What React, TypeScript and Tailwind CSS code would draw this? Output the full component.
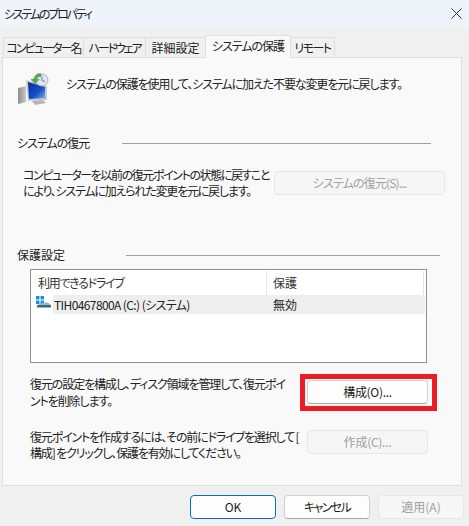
const font = { fontFamily: '"Noto Sans CJK JP", sans-serif' };

function RestoreIcon() {
  return (
    <svg width="32" height="32" viewBox="0 0 32 32" className="shrink-0">
      <defs>
        <linearGradient id="scr" x1="0" y1="0" x2="1" y2="1">
          <stop offset="0" stopColor="#0a2aa0" />
          <stop offset="0.6" stopColor="#1450c8" />
          <stop offset="1" stopColor="#7fb0ea" />
        </linearGradient>
        <linearGradient id="case" x1="0" y1="0" x2="1" y2="0">
          <stop offset="0" stopColor="#8d8d8d" />
          <stop offset="1" stopColor="#c8c8c8" />
        </linearGradient>
      </defs>
      <path d="M1 15 L9 13 L9 29 L1 31 Z" fill="url(#case)" />
      <path d="M9 7 L30 13 L30 27 L11 28 Z" fill="#c4c8cc" />
      <path d="M11 9 L28 14 L28 25 L12 26 Z" fill="url(#scr)" />
      <path d="M15 28 L26 27 L29 30 L18 32 Z" fill="#b4b6b8" />
      <circle cx="25" cy="7" r="6" fill="#dfe6f2" stroke="#a9b4c6" strokeWidth="1" />
      <path d="M25 3.5 V7.5 L28 8.5" fill="none" stroke="#6f7c90" strokeWidth="1" />
      <path d="M17 6 C18 1.5 21 0 24 1 L24 3.5 C21.5 3 20 4 19.5 6.5 L22 6.5 L18 10.5 L14 6.5 Z" fill="#55b13f" stroke="#2f8a2a" strokeWidth="0.5" />
    </svg>
  );
}

function DriveIcon() {
  return (
    <svg width="16" height="16" viewBox="0 0 16 16" className="shrink-0">
      <rect x="0" y="0" width="3.5" height="3.5" fill="#1f8ee0" />
      <rect x="4.5" y="0" width="3.5" height="3.5" fill="#1f8ee0" />
      <rect x="0" y="4.5" width="3.5" height="3.5" fill="#1f8ee0" />
      <rect x="4.5" y="4.5" width="3.5" height="3.5" fill="#1f8ee0" />
      <path d="M1 9 L8.5 6.5 H12 L15 9 Z" fill="#a9b6bf" />
      <rect x="1" y="9" width="14" height="2.5" rx="0.5" fill="#2f6f80" />
    </svg>
  );
}

function Btn({ label, w, disabled, primary, track = "" }: { label: string; w: string; disabled?: boolean; primary?: boolean; track?: string }) {
  let tone = "bg-[#fdfdfd] border-[#d0d0d0] border-b-[#a8a8a8] text-[#1a1a1a]";
  if (disabled) tone = "bg-[#f6f6f6] border-[#e6e6e6] text-[#a0a0a0]";
  if (primary) tone = "bg-[#fdfdfd] border-[#0a6cc4] text-[#1a1a1a]";
  return (
    <div className={`${w} h-[24px] rounded-[4px] border flex items-center justify-center text-[12px] ${track} ${tone}`}>
      {label}
    </div>
  );
}

function Heading({ label, labelWidth, lineWidth, track = "" }: { label: string; labelWidth: string; lineWidth: string; track?: string }) {
  return (
    <div className="flex items-center h-[18px] ml-[14px]">
      <span className={`${labelWidth} text-[12px] ${track} text-[#222] whitespace-nowrap`}>{label}</span>
      <div className={`${lineWidth} h-px bg-[#a0a0a0]`} />
    </div>
  );
}

function Tab({ label, w, active, track = "" }: { label: string; w: string; active?: boolean; track?: string }) {
  if (active) {
    return (
      <div className={`${w} h-[23px] -mb-px pb-[2px] relative z-10 bg-[#f9f9f9] border border-[#dfdfdf] border-b-0 flex items-center justify-center text-[12px] ${track} text-[#222] whitespace-nowrap`}>
        {label}
      </div>
    );
  }
  return (
    <div className={`${w} h-[20px] bg-[#f0f0f0] border border-[#dfdfdf] border-b-0 -ml-px flex items-center justify-center text-[12px] ${track} text-[#222] whitespace-nowrap`}>
      {label}
    </div>
  );
}

export default function App() {
  return (
    <div className={`w-[469px] h-[526px] bg-[#f0f0f0] overflow-hidden flex flex-col [font-feature-settings:"palt"]`} style={font}>
      <div className="h-[27px] bg-[#eff4fb] flex items-center justify-between pl-[4px] pr-[7px] shrink-0">
        <span className="text-[12px] tracking-[-2.2px] text-[#222]">システムのプロパティ</span>
        <svg width="11" height="11" viewBox="0 0 11 11">
          <path d="M0.5 0.5 L10.5 10.5 M10.5 0.5 L0.5 10.5" stroke="#333" strokeWidth="1" />
        </svg>
      </div>

      <div className="flex items-end h-[30px] pl-[4px] shrink-0">
        <Tab label="コンピューター名" w="w-[81px]" track="tracking-[-1.9px]" />
        <Tab label="ハードウェア" w="w-[63px]" track="tracking-[-2.1px]" />
        <Tab label="詳細設定" w="w-[61px]" />
        <Tab label="システムの保護" w="w-[86px] -ml-px" track="tracking-[-1px]" active />
        <Tab label="リモート" w="w-[45px]" track="tracking-[-1.5px]" />
      </div>

      <div className="ml-[2px] w-[460px] h-[429px] bg-[#f9f9f9] border border-[#dfdfdf] shrink-0 flex flex-col">
        <div className="flex items-start pl-[14px] pt-[15px] h-[76px]">
          <RestoreIcon />
          <span className="ml-[17px] mt-[2px] text-[12px] leading-[18px] tracking-[-1.1px] text-[#222] whitespace-nowrap">
            システムの保護を使用して、システムに加えた不要な変更を元に戻します。
          </span>
        </div>

        <Heading label="システムの復元" labelWidth="w-[105px]" lineWidth="w-[309px]" track="tracking-[-1px]" />

        <div className="flex items-center h-[34px] mt-[14px] ml-[20px]">
          <div className="w-[251px] text-[12px] leading-[16px] text-[#222] whitespace-nowrap">
            <div className="tracking-[-1.4px]">コンピューターを以前の復元ポイントの状態に戻すこと</div>
            <div className="tracking-[-1.2px]">により、システムに加えられた変更を元に戻します。</div>
          </div>
          <Btn label="システムの復元(S)..." w="w-[171px]" track="tracking-[-0.85px]" disabled />
        </div>

        <div className="mt-[46px]">
          <Heading label="保護設定" labelWidth="w-[109px]" lineWidth="w-[314px]" />
        </div>

        <div className="ml-[27px] mt-[5px] w-[397px] h-[94px] bg-white border border-[#8b9099] p-px">
          <div className="flex h-[24px] text-[12px] text-[#333] items-center">
            <div className="w-[235px] h-full border-r border-[#e4e4e4] pl-[6px] flex items-center tracking-[-1.3px]">利用できるドライブ</div>
            <div className="pl-[6px] w-[157px] h-full border-r border-[#e4e4e4] flex items-center">保護</div>
          </div>
          <div className="flex h-[19px] items-center text-[12px] text-[#222]">
            <div className="w-[21px] flex justify-start pl-[4px] -mt-[2px]">
              <DriveIcon />
            </div>
            <div className="flex flex-1 h-full bg-[#eeeeee] items-center">
              <div className="w-[214px] pl-[1px] tracking-[-0.6px] whitespace-nowrap">TIH0467800A (C:) (システム)</div>
              <div className="pl-[6px]">無効</div>
            </div>
          </div>
        </div>

        <div className="flex items-start ml-[27px] mt-[11px]">
          <div className="w-[270px] pt-[1px] text-[12px] leading-[17px] tracking-[-1.1px] text-[#222] whitespace-nowrap">
            <div>復元の設定を構成し、ディスク領域を管理して、復元ポイ</div>
            <div>ントを削除します。</div>
          </div>
          <div className="border-[5px] border-[#ed1c24] pl-[2px] pr-[4px] pt-[1px] pb-[2px]">
            <Btn label="構成(O)..." w="w-[121px]" track="tracking-[-0.3px]" />
          </div>
        </div>

        <div className="flex items-start ml-[27px] mt-[19px]">
          <div className="w-[277px] h-[33px] -mt-[1px] text-[12px] leading-[16px] tracking-[-1.15px] text-[#222] whitespace-nowrap">
            <div>復元ポイントを作成するには、その前にドライブを選択して [</div>
            <div>構成] をクリックし、保護を有効にしてください。</div>
          </div>
          <Btn label="作成(C)..." w="w-[121px]" track="tracking-[-0.3px]" disabled />
        </div>
      </div>

      <div className="flex justify-end gap-[8px] pr-[5px] mt-[9px]">
        <Btn label="OK" w="w-[86px]" primary />
        <Btn label="キャンセル" w="w-[86px]" track="tracking-[-1.6px]" />
        <Btn label="適用(A)" w="w-[86px]" disabled />
      </div>
    </div>
  );
}
